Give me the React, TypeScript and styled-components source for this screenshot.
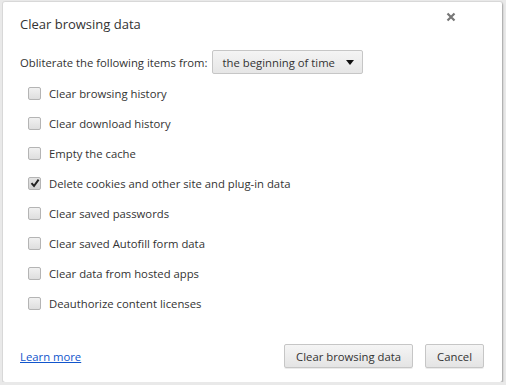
import React, { useState } from "react";
import styled, { createGlobalStyle } from "styled-components";

const GlobalStyle = createGlobalStyle`
  html, body {
    margin: 0;
    padding: 0;
    background: #e9e9e9;
  }
  body {
    font-family: "Open Sans", "Noto Sans", sans-serif;
    font-size: 11.3px;
    color: #333;
  }
`;

const items = [
  { label: "Clear browsing history", checked: false },
  { label: "Clear download history", checked: false },
  { label: "Empty the cache", checked: false },
  { label: "Delete cookies and other site and plug-in data", checked: true },
  { label: "Clear saved passwords", checked: false },
  { label: "Clear saved Autofill form data", checked: false },
  { label: "Clear data from hosted apps", checked: false },
  { label: "Deauthorize content licenses", checked: false },
];

const App = () => {
  const [state, setState] = useState(items.map((i) => i.checked));

  return (
    <>
      <GlobalStyle />
      <Dialog>
        <Header>
          <Title>Clear browsing data</Title>
          <CloseButton aria-label="Close">
            <svg width="10" height="10" viewBox="0 0 10 10">
              <path d="M1.5 1.5 L8.5 8.5 M8.5 1.5 L1.5 8.5" stroke="#777" strokeWidth="2.2" />
            </svg>
          </CloseButton>
        </Header>
        <PeriodRow>
          <span>Obliterate the following items from:</span>
          <Select>
            <span>the beginning of time</span>
            <Arrow />
          </Select>
        </PeriodRow>
        <List>
          {items.map((item, i) => (
            <Option key={item.label}>
              <Box
                $checked={state[i]}
                onClick={() => setState((s) => s.map((v, j) => (j === i ? !v : v)))}
              >
                {state[i] && (
                  <svg width="10" height="10" viewBox="0 0 10 10">
                    <path d="M1.5 5.2 L4 8 L8.6 1.6" stroke="#222" strokeWidth="2" fill="none" />
                  </svg>
                )}
              </Box>
              <span>{item.label}</span>
            </Option>
          ))}
        </List>
        <Footer>
          <LearnMore href="#">Learn more</LearnMore>
          <Buttons>
            <Button>Clear browsing data</Button>
            <Button>Cancel</Button>
          </Buttons>
        </Footer>
      </Dialog>
    </>
  );
};

const Dialog = styled.div`
  box-sizing: border-box;
  margin: 2px 0 0 3px;
  width: 499px;
  height: 380px;
  background: #fff;
  border-radius: 2px;
  box-shadow: 1px 1px 2px rgba(0, 0, 0, 0.25), 0 0 0 1px rgba(0, 0, 0, 0.06);
  display: flex;
  flex-direction: column;
  padding: 0 18px 14px 17px;
`;

const Header = styled.div`
  display: flex;
  justify-content: space-between;
  align-items: flex-start;
  height: 48px;
`;

const Title = styled.h1`
  margin: 13px 0 0 0;
  font-size: 13px;
  font-weight: normal;
  color: #333;
`;

const CloseButton = styled.button`
  border: 0;
  background: none;
  padding: 0;
  margin: 10px 28px 0 0;
  display: flex;
`;

const PeriodRow = styled.div`
  display: flex;
  align-items: center;
  gap: 4px;
  height: 24px;
`;

const Select = styled.div`
  box-sizing: border-box;
  height: 24px;
  width: 151px;
  display: flex;
  align-items: center;
  justify-content: space-between;
  padding: 0 8px 0 10px;
  border: 1px solid #c6c6c6;
  border-radius: 2px;
  background: linear-gradient(#f4f4f4, #e6e6e6);
  color: #333;
`;

const Arrow = styled.span`
  width: 0;
  height: 0;
  border-left: 4px solid transparent;
  border-right: 4px solid transparent;
  border-top: 5px solid #111;
`;

const List = styled.div`
  display: flex;
  flex-direction: column;
  padding: 4px 0 0 8px;
`;

const Option = styled.label`
  display: flex;
  align-items: center;
  gap: 8px;
  height: 30px;
`;

const Box = styled.span<{ $checked: boolean }>`
  box-sizing: border-box;
  width: 13px;
  height: 13px;
  border: 1px solid #b4b4b4;
  border-radius: 2px;
  background: ${(p) =>
    p.$checked ? "linear-gradient(#e4e4e4, #d2d2d2)" : "linear-gradient(#f1f1f1, #dedede)"};
  display: flex;
  align-items: center;
  justify-content: center;
`;

const Footer = styled.div`
  margin-top: auto;
  height: 24px;
  display: flex;
  align-items: center;
  justify-content: space-between;
`;

const LearnMore = styled.a`
  color: #1155cc;
`;

const Buttons = styled.div`
  display: flex;
  gap: 12px;
`;

const Button = styled.button`
  box-sizing: border-box;
  height: 24px;
  padding: 0 11px;
  font: inherit;
  color: #333;
  border: 1px solid #c6c6c6;
  border-radius: 2px;
  background: linear-gradient(#f5f5f5, #e4e4e4);
  box-shadow: 0 1px 0 rgba(0, 0, 0, 0.08);
`;

export default App;
